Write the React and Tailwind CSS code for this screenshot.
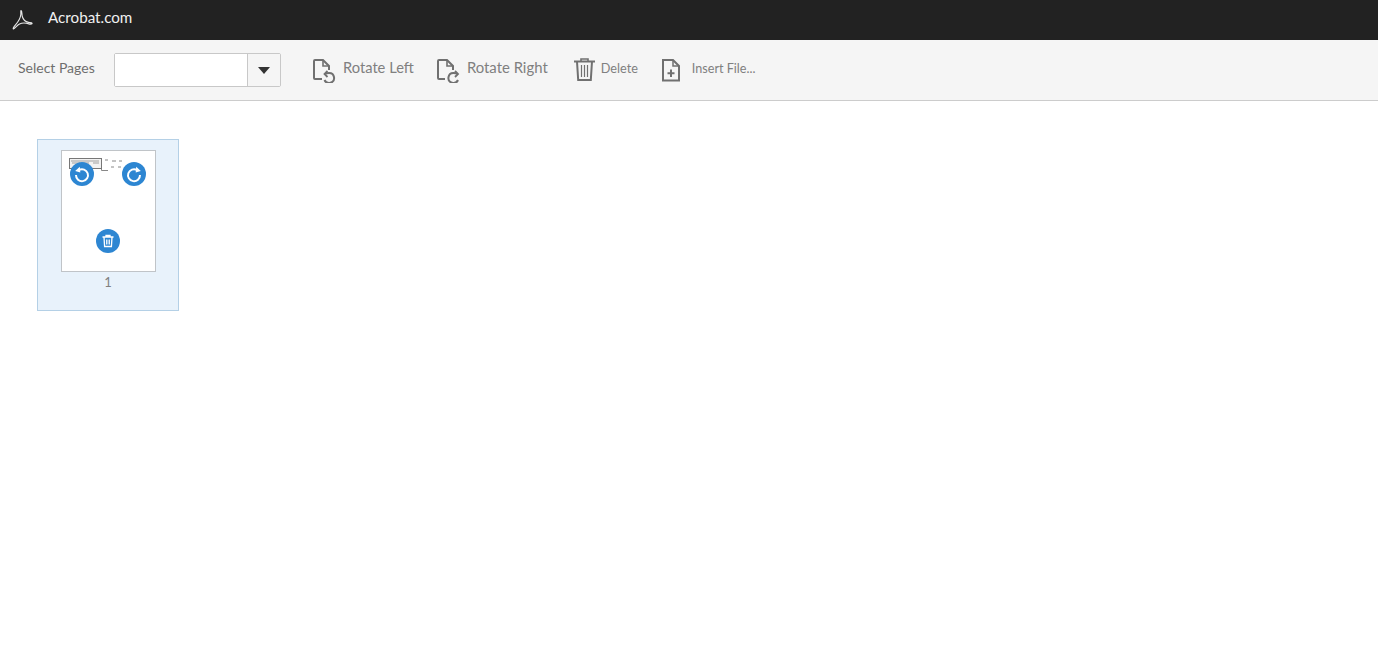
import React from "react";

const font = { fontFamily: '"Lato", "Open Sans", sans-serif' };

const AcrobatLogo = () => (
  <svg width="22" height="22" viewBox="0 0 22 22" fill="none" stroke="#e8e8e8" strokeWidth="1.100">
    <path d="M9 1.500c1.400 .6 .6 3.500 1.300 6 .9 3.200 3.600 5.400 6.200 5.900 1.500 .3 3.200 .1 3.600 .9 .3 .8-1.700 1-3.200 .6C14 14 10.500 13.600 7.500 15 5 16.200 3 19.600 1.500 20 .6 19.800 1.800 17.800 3.500 15.800 6 13 8.500 9 8.800 5.500 9 3.800 8.400 1.800 9 1.500Z" />
  </svg>
);

const RotateLeftDoc = () => (
  <svg width="24" height="26" viewBox="0 -2 24 26" fill="none" stroke="#707070" strokeWidth="2">
    <path d="M9 20H2a1 1 0 0 1-1-1V2a1 1 0 0 1 1-1h8l6 6v4" />
    <path d="M10 1v6h6" strokeWidth="1.600" />
    <path d="M12 15c1-.7 2.500-1 4-1a5 5 0 1 1-4.500 7" />
    <path d="M14.500 12l-3 3 3 3" strokeWidth="1.800" />
  </svg>
);

const RotateRightDoc = () => (
  <svg width="24" height="26" viewBox="0 -2 24 26" fill="none" stroke="#707070" strokeWidth="2">
    <path d="M8 20H2a1 1 0 0 1-1-1V2a1 1 0 0 1 1-1h8l6 6v4" />
    <path d="M20.500 15c-1-.7-2.500-1-4-1a5 5 0 1 0 4.500 7" />
    <path d="M10 1v6h6" strokeWidth="1.600" />
    <path d="M18 12l3 3-3 3" strokeWidth="1.800" />
  </svg>
);

const TrashIcon = () => (
  <svg width="22" height="24" viewBox="0 0 22 24" fill="none" stroke="#707070" strokeWidth="2">
    <path d="M0 3.500h21" />
    <path d="M7 3.500V1h7v2.500" strokeWidth="1.600" />
    <path d="M3 3.500l1.200 18.500h12.600L18 3.500" />
    <path d="M7.500 7v12M10.500 7v12M13.500 7v12" strokeWidth="1.200" />
  </svg>
);

const InsertIcon = () => (
  <svg width="19" height="23" viewBox="0 0 19 23" fill="none" stroke="#707070" strokeWidth="2">
    <path d="M1 1h10l6 6v14.500H1z" />
    <path d="M11 1v6h6" strokeWidth="1.500" />
    <path d="M9 10.500v7.500M5.500 14.200h7" />
  </svg>
);

const ToolButton = ({ icon, label, className }) => (
  <div className={`flex items-center ${className}`}>
    {icon}
    {label}
  </div>
);

const CircleButton = ({ className, children }) => (
  <div className={`absolute w-6 h-6 rounded-full bg-[#2d86d2] flex items-center justify-center ${className}`}>
    {children}
  </div>
);

export default function App() {
  return (
    <div className="min-h-screen bg-white" style={font}>
      <div className="h-10 bg-[#222222] flex items-center pl-[12px]">
        <div className="mb-[1px]">
          <AcrobatLogo />
        </div>
        <span className="ml-[14px] mb-[6px] text-[15.200px] text-[#f0f0f0]">Acrobat.com</span>
      </div>

      <div className="h-[61px] bg-[#f5f5f5] border-b border-[#cccccc] flex items-center pl-[18px]">
        <span className="text-[14px] text-[#6e6e6e] w-[96px] mb-[6px]">Select Pages</span>
        <div className="flex h-[34px] w-[167px] border border-[#c8c8c8] rounded-[2px] bg-white">
          <div className="flex-1 bg-white" />
          <div className="w-[33px] bg-[#f5f5f5] border-l border-[#c8c8c8] flex items-center justify-center">
            <div className="w-0 h-0 border-l-[6px] border-r-[6px] border-t-[7px] border-l-transparent border-r-transparent border-t-[#333333]" />
          </div>
        </div>
        <ToolButton
          className="ml-[32px]"
          icon={<RotateLeftDoc />}
          label={<span className="ml-[6px] mb-[5px] text-[14.700px] text-[#808080]">Rotate Left</span>}
        />
        <ToolButton
          className="ml-[23px]"
          icon={<RotateRightDoc />}
          label={<span className="ml-[6px] mb-[5px] text-[14.900px] text-[#808080]">Rotate Right</span>}
        />
        <ToolButton
          className="ml-[26px]"
          icon={<TrashIcon />}
          label={<span className="ml-[5px] mb-[3px] text-[12.700px] text-[#808080]">Delete</span>}
        />
        <ToolButton
          className="ml-[24px]"
          icon={<InsertIcon />}
          label={<span className="ml-[11px] mb-[1px] text-[12.600px] text-[#808080]">Insert File...</span>}
        />
      </div>

      <div className="pt-[38px] pl-[37px]">
        <div className="w-[142px] h-[172px] bg-[#e8f2fb] border border-[#b4d0e6] flex flex-col items-center pt-[10px]">
          <div className="relative w-[95px] h-[122px] bg-white border border-[#c0c4c8]">
            <svg className="absolute left-[7px] top-[7px]" width="58" height="16" viewBox="0 0 58 16" fill="none">
              <rect x="0.500" y="0.500" width="32" height="10" fill="#f2f2f2" stroke="#777777" strokeWidth="1" />
              <path d="M2 3h28M3 5h8M14 5h6M24 5h6" stroke="#a0a0a0" strokeWidth="1" />
              <path d="M32.500 11v1.500H39M36 2h3M43 3h4M50 3h3M42 9h3M49 9h3" stroke="#888888" strokeWidth="1" />
            </svg>
            <CircleButton className="left-[8px] top-[11px]">
              <svg width="18" height="18" viewBox="0 0 18 18" fill="none" stroke="white" strokeWidth="2">
                <path d="M6 5a6 6 0 1 1-3 5" />
                <path d="M6.800 1.800L7.300 7.500 2.200 6z" fill="white" stroke="none" />
              </svg>
            </CircleButton>
            <CircleButton className="left-[60px] top-[11px]">
              <svg width="18" height="18" viewBox="0 0 18 18" fill="none" stroke="white" strokeWidth="2">
                <path d="M12 5a6 6 0 1 0 3 5" />
                <path d="M11.200 1.800L10.700 7.500 15.800 6z" fill="white" stroke="none" />
              </svg>
            </CircleButton>
            <CircleButton className="left-[34px] top-[78px]">
              <svg width="14" height="14" viewBox="0 0 14 14" fill="none" stroke="white" strokeWidth="1.300">
                <path d="M1.500 3h11M5 3V1.500h4V3" />
                <path d="M3 3l.6 9.500h6.800L11 3" />
                <path d="M5.500 5.500v5M7 5.500v5M8.500 5.500v5" strokeWidth="0.900" />
              </svg>
            </CircleButton>
          </div>
          <span className="mt-[1px] text-[13px] text-[#808080]">1</span>
        </div>
      </div>
    </div>
  );
}
